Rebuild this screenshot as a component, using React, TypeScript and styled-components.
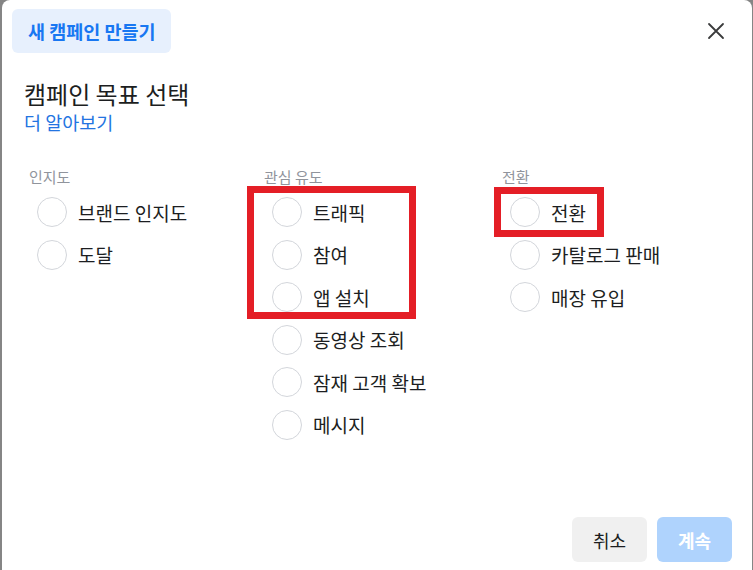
import styled, { createGlobalStyle } from 'styled-components';

const GlobalStyle = createGlobalStyle`
    html, body {
        margin: 0;
        padding: 0;
        background: #858585;
        font-family: "Noto Sans CJK KR", "Noto Sans", sans-serif;
    }
`;

const Dialog = styled.div`
    position: relative;
    box-sizing: border-box;
    margin-left: 2px;
    width: 750px;
    height: 570px;
    background: #ffffff;
    border-radius: 8px 8px 0 0;
    display: flex;
    flex-direction: column;
`;

const Header = styled.div`
    display: flex;
    align-items: center;
    justify-content: space-between;
    padding: 9px 27px 0 10px;
`;

const Badge = styled.div`
    height: 44px;
    padding: 0 15px 0 16px;
    display: flex;
    align-items: center;
    background: #e7f0fd;
    border-radius: 6px;
    color: #1877f2;
    font-size: 18.5px;
    font-weight: 700;
`;

const CloseButton = styled.button`
    border: 0;
    background: none;
    padding: 0;
    width: 18px;
    height: 18px;
    display: flex;
    cursor: pointer;
`;

const Title = styled.h2`
    margin: 26px 0 0 22px;
    font-size: 24px;
    line-height: 30px;
    font-weight: 400;
    color: #1c1e21;
`;

const LearnMore = styled.a`
    margin: 0 0 0 22px;
    font-size: 18.5px;
    line-height: 26px;
    color: #2374e1;
    text-decoration: none;
`;

const Columns = styled.div`
    display: grid;
    grid-template-columns: 235px 238px 1fr;
    margin: 32px 0 0 27px;
`;

const Group = styled.div`
    display: flex;
    flex-direction: column;
`;

const GroupLabel = styled.div`
    font-size: 15px;
    line-height: 20px;
    color: #90949c;
    margin-bottom: 4px;
`;

const Option = styled.label`
    display: flex;
    align-items: center;
    height: 42.5px;
    padding-left: 8px;
    gap: 11px;
    font-size: 19px;
    color: #1c1e21;
    cursor: pointer;
`;

const Radio = styled.span`
    box-sizing: border-box;
    width: 30px;
    height: 30px;
    border-radius: 50%;
    border: 1px solid #d3d6db;
    background: #fff;
    flex-shrink: 0;
`;

const Footer = styled.div`
    margin-top: auto;
    display: flex;
    justify-content: flex-end;
    gap: 10px;
    padding: 0 20px 8px 0;
`;

const FooterButton = styled.button<{ $primary?: boolean }>`
    width: 75px;
    height: 45px;
    border: 0;
    border-radius: 6px;
    font-family: inherit;
    font-size: 18px;
    font-weight: ${(p) => (p.$primary ? 700 : 400)};
    background: ${(p) => (p.$primary ? '#afd3fd' : '#f0f0f0')};
    color: ${(p) => (p.$primary ? '#ffffff' : '#1c1e21')};
`;

const Highlight = styled.div<{ $left: number; $top: number; $w: number; $h: number }>`
    position: absolute;
    box-sizing: border-box;
    left: ${(p) => p.$left}px;
    top: ${(p) => p.$top}px;
    width: ${(p) => p.$w}px;
    height: ${(p) => p.$h}px;
    border: 7px solid #e41e26;
    pointer-events: none;
`;

const groups = [
    { label: '인지도', options: ['브랜드 인지도', '도달'] },
    { label: '관심 유도', options: ['트래픽', '참여', '앱 설치', '동영상 조회', '잠재 고객 확보', '메시지'] },
    { label: '전환', options: ['전환', '카탈로그 판매', '매장 유입'] },
];

export default function App() {
    return (
        <>
            <GlobalStyle />
            <Dialog>
                <Header>
                    <Badge>새 캠페인 만들기</Badge>
                    <CloseButton aria-label="닫기">
                        <svg width="18" height="18" viewBox="0 0 18 18">
                            <path d="M2 2 L16 16 M16 2 L2 16" stroke="#3a3b3c" strokeWidth="1.8" strokeLinecap="round" />
                        </svg>
                    </CloseButton>
                </Header>
                <Title>캠페인 목표 선택</Title>
                <LearnMore href="#">더 알아보기</LearnMore>
                <Columns>
                    {groups.map((g) => (
                        <Group key={g.label}>
                            <GroupLabel>{g.label}</GroupLabel>
                            {g.options.map((o) => (
                                <Option key={o}>
                                    <Radio />
                                    {o}
                                </Option>
                            ))}
                        </Group>
                    ))}
                </Columns>
                <Footer>
                    <FooterButton>취소</FooterButton>
                    <FooterButton $primary>계속</FooterButton>
                </Footer>
                <Highlight $left={245} $top={186} $w={169} $h={133} />
                <Highlight $left={492} $top={187} $w={110} $h={50} />
            </Dialog>
        </>
    );
}
